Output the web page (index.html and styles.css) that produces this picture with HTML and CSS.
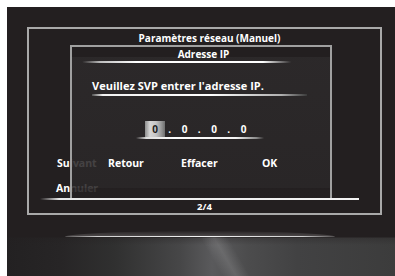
FILE: index.html
```html
<!DOCTYPE html>
<html>
<head>
<meta charset="utf-8">
<link rel="stylesheet" href="styles.css">
</head>
<body>
<div class="screen">
  <div class="frame">
    <div class="frame-title">Paramètres réseau (Manuel)</div>
    <div class="frame-main">
      <div class="side-btn">Suivant</div>
      <div class="side-btn second">Annuler</div>
    </div>
    <div class="sep"></div>
    <div class="page">2/4</div>
    <div class="dialog">
      <div class="dlg-title">Adresse IP</div>
      <div class="dlg-rule"></div>
      <div class="prompt">Veuillez SVP entrer l'adresse IP.</div>
      <div class="prompt-rule"></div>
      <div class="ip">
        <span class="cell active">0</span><span class="dot">.</span><span class="cell">0</span><span class="dot">.</span><span class="cell">0</span><span class="dot">.</span><span class="cell">0</span>
      </div>
      <div class="ip-rule"></div>
      <div class="buttons"><span>Retour</span><span>Effacer</span><span>OK</span></div>
    </div>
  </div>
  <div class="reflection"></div>
</div>
</body>
</html>
```

FILE: styles.css
```css
html, body {
  margin: 0;
  padding: 0;
  background: #ffffff;
}
body {
  font-family: "Open Sans", Lato, "DejaVu Sans", sans-serif;
  font-weight: 700;
  color: #ffffff;
}
.screen {
  margin: 7px 0 0 7px;
  width: 388px;
  height: 269px;
  background: #231f20;
  box-sizing: border-box;
  padding-top: 20px;
  display: flex;
  flex-direction: column;
  overflow: hidden;
}
.frame {
  margin-left: 20px;
  width: 355px;
  height: 188px;
  flex: none;
  box-sizing: border-box;
  border: 2px solid #a9a9a9;
  position: relative;
  display: flex;
  flex-direction: column;
}
.frame-title {
  height: 18px;
  line-height: 18px;
  font-size: 10px;
  text-align: center;
  padding-left: 10px;
}
.frame-main {
  height: 151px;
  box-sizing: border-box;
  padding-top: 109px;
  padding-left: 28px;
}
.side-btn {
  height: 14px;
  line-height: 14px;
  font-size: 10.5px;
}
.side-btn.second {
  margin-top: 11px;
  margin-left: -1px;
}
.sep {
  height: 2px;
  margin-left: 11px;
  width: 319px;
  background: linear-gradient(to right, rgba(255,255,255,0) 0, #e8e8e8 6%, #f4f4f4 100%);
}
.page {
  height: 13px;
  line-height: 13px;
  font-size: 9.5px;
  text-align: center;
}
.dialog {
  position: absolute;
  left: 41px;
  top: 16px;
  width: 262px;
  height: 153px;
  box-sizing: border-box;
  border: 2px solid #a0a0a0;
  border-bottom: none;
  background:
    linear-gradient(to bottom,
      rgba(35,31,32,0.86) 0, rgba(35,31,32,0.86) 10px,
      rgba(45,42,43,0.88) 10px, rgba(42,39,40,0.88) 141px,
      rgba(36,32,33,0.9) 141px, rgba(36,32,33,0.9) 100%);
}
.dlg-title {
  height: 14px;
  line-height: 14px;
  font-size: 10px;
  text-align: center;
  padding-left: 5px;
}
.dlg-rule {
  height: 2px;
  background: linear-gradient(to right, rgba(255,255,255,0) 4%, #bdbdbd 11%, #ffffff 25%, #ffffff 74%, rgba(255,255,255,0) 85%);
}
.prompt {
  margin-top: 16px;
  height: 14px;
  line-height: 14px;
  font-size: 11px;
  padding-left: 20px;
}
.prompt-rule {
  margin-top: 1px;
  margin-left: 20px;
  width: 215px;
  height: 2px;
  background: linear-gradient(to right, #505050 0, #f2f2f2 5%, #ffffff 55%, #b0b0b0 88%, #3a3a3a 100%);
}
.ip {
  margin-top: 25px;
  padding-left: 73px;
  display: flex;
  height: 16px;
}
.cell, .dot {
  display: block;
  height: 16px;
  line-height: 17px;
  font-size: 10px;
  text-align: center;
}
.cell {
  width: 20px;
}
.dot {
  width: 9.5px;
}
.cell.active {
  color: #1e1e1e;
  background: linear-gradient(to right, #8e8e8e 0, #d6d6d6 25%, #c4c4c4 55%, #9a9a9a 80%, #6e6e6e 100%);
}
.ip-rule {
  margin-left: 64px;
  width: 128px;
  height: 2px;
  background: linear-gradient(to right, rgba(255,255,255,0) 0, #dcdcdc 8%, #ffffff 30%, #f4f4f4 78%, #8a8a8a 94%, rgba(255,255,255,0) 100%);
}
.buttons {
  margin-top: 17px;
  padding-left: 36px;
  display: grid;
  grid-template-columns: 73px 81px auto;
  height: 14px;
  line-height: 14px;
  font-size: 10.5px;
}
.reflection {
  margin-top: 20px;
  margin-left: -1px;
  height: 41px;
  flex: none;
  position: relative;
  background:
    linear-gradient(to bottom, rgba(35,31,32,1) 0, rgba(35,31,32,1) 2px, rgba(35,31,32,0.3) 3px, rgba(35,31,32,0) 10px),
    linear-gradient(to right, #232122 0, #272526 14%, #303030 28%, #474748 45%, #5a5a5c 53%, #4c4c4d 62%, #424243 75%, #3c3c3c 100%);
}
.reflection::before {
  content: "";
  position: absolute;
  left: 59px;
  top: -4px;
  width: 270px;
  height: 6px;
  border-radius: 50% / 100% 100% 0 0;
  background:
    linear-gradient(to right, rgba(255,255,255,0) 0, #cfcfcf 12%, #f4f4f4 50%, #cfcfcf 88%, rgba(255,255,255,0) 100%) bottom / 100% 1.5px no-repeat,
    linear-gradient(to bottom, rgba(255,255,255,0.02), rgba(255,255,255,0.22));
}
.reflection::after {
  content: "";
  position: absolute;
  left: 205px;
  top: 2px;
  width: 28px;
  height: 39px;
  transform: skewX(30deg);
  background: linear-gradient(to right, rgba(255,255,255,0) 0, rgba(255,255,255,0.12) 50%, rgba(255,255,255,0) 100%);
}
```
